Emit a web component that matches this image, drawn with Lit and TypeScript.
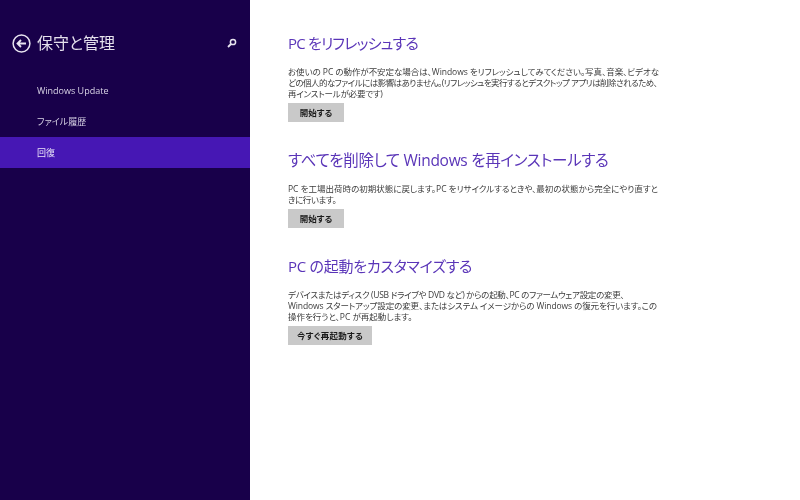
import { LitElement, html, css } from "lit";
import { customElement } from "lit/decorators.js";

const sections = [
  { t: "PC をリフレッシュする", ts: -0.8, lines: [["お使いの PC の動作が不安定な場合は、Windows をリフレッシュしてみてください。写真、音楽、ビデオな", -0.05], ["どの個人的なファイルには影響はありません。(リフレッシュを実行するとデスクトップ アプリは削除されるため、", -0.53], ["再インストールが必要です)", -0.2]], b: "開始する", cls: "s1" },
  { t: "すべてを削除して Windows を再インストールする", ts: -0.3, lines: [["PC を工場出荷時の初期状態に戻します。PC をリサイクルするときや、最初の状態から完全にやり直すと", 0], ["きに行います。", -0.4]], b: "開始する", cls: "s2" },
  { t: "PC の起動をカスタマイズする", ts: -0.27, lines: [["デバイスまたはディスク (USB ドライブや DVD など) からの起動、PC のファームウェア設定の変更、", -0.3], ["Windows スタートアップ設定の変更、またはシステム イメージからの Windows の復元を行います。この", -0.1], ["操作を行うと、PC が再起動します。", 0]], b: "今すぐ再起動する", cls: "s3" },
];

@customElement("app-root")
export class AppRoot extends LitElement {
  static styles = css`
    :host { display: block; width: 800px; height: 500px; overflow: hidden; font-family: "Open Sans", "Noto Sans CJK JP", sans-serif; font-feature-settings: "palt"; }
    .page { display: flex; width: 800px; height: 500px; background: #fff; filter: blur(0.45px); }
    .side { width: 250px; flex: none; background: #18004a; color: #e6e2ef; display: flex; flex-direction: column; }
    .head { display: flex; align-items: center; padding: 30px 13px 0 12px; height: 26px; }
    .title { font-size: 16px; line-height: 26px; margin-left: 6px; flex: 1; color: #e4e0ec; white-space: nowrap; }
    .nav { margin-top: 19px; display: flex; flex-direction: column; }
    .item { height: 31px; padding-left: 37px; font-size: 9px; line-height: 31px; color: #d9d4e6; }
    .item.sel { background: #4617b4; color: #e8e2f8; }
    .main { flex: 1; padding: 33px 0 0 38px; }
    .sec { display: flex; flex-direction: column; align-items: flex-start; }
    .s2 { margin-top: 28px; }
    .s3 { margin-top: 28px; }
    h2 { margin: 0; font-weight: 400; font-size: 15px; line-height: 20px; color: #5a35b8; white-space: nowrap; }
    .s2 h2 { font-size: 15.5px; }
    p { margin: 13px 0 0; font-size: 8.5px; line-height: 11px; color: #3c3c3c; white-space: nowrap; }
    .ln { display: block; }
    .btn { margin-top: 4px; height: 19px; line-height: 19px; padding: 0 9px; min-width: 38px; text-align: center; background: #c9c9c9; color: #1c1c1c; font-size: 8.5px; font-weight: 700; }
    .s3 .btn { letter-spacing: 0.25px; }
    svg { display: block; flex: none; }
  `;

  render() {
    return html`<div class="page">
      <div class="side">
        <div class="head">
          <svg width="19" height="19" viewBox="0 0 19 19" fill="none" stroke="#e8e4f0">
            <circle cx="9.5" cy="9.5" r="8.4" stroke-width="1.5" />
            <path d="M14 9.5H6M9 6L5.5 9.5L9 13" stroke-width="1.8" />
          </svg>
          <div class="title">保守と管理</div>
          <svg width="10" height="10" viewBox="0 0 10 10" fill="none" stroke="#e8e4f0">
            <circle cx="6" cy="4" r="2.6" stroke-width="1.5" />
            <path d="M4 6L1 9" stroke-width="1.8" />
          </svg>
        </div>
        <div class="nav">
          <div class="item">Windows Update</div>
          <div class="item">ファイル履歴</div>
          <div class="item sel">回復</div>
        </div>
      </div>
      <div class="main">
        ${sections.map(
          (s) => html`<div class="sec ${s.cls}">
            <h2 style="letter-spacing:${s.ts}px">${s.t}</h2>
            <p>${s.lines.map((l) => html`<span class="ln" style="letter-spacing:${l[1]}px">${l[0]}</span>`)}</p>
            <div class="btn">${s.b}</div>
          </div>`
        )}
      </div>
    </div>`;
  }
}
